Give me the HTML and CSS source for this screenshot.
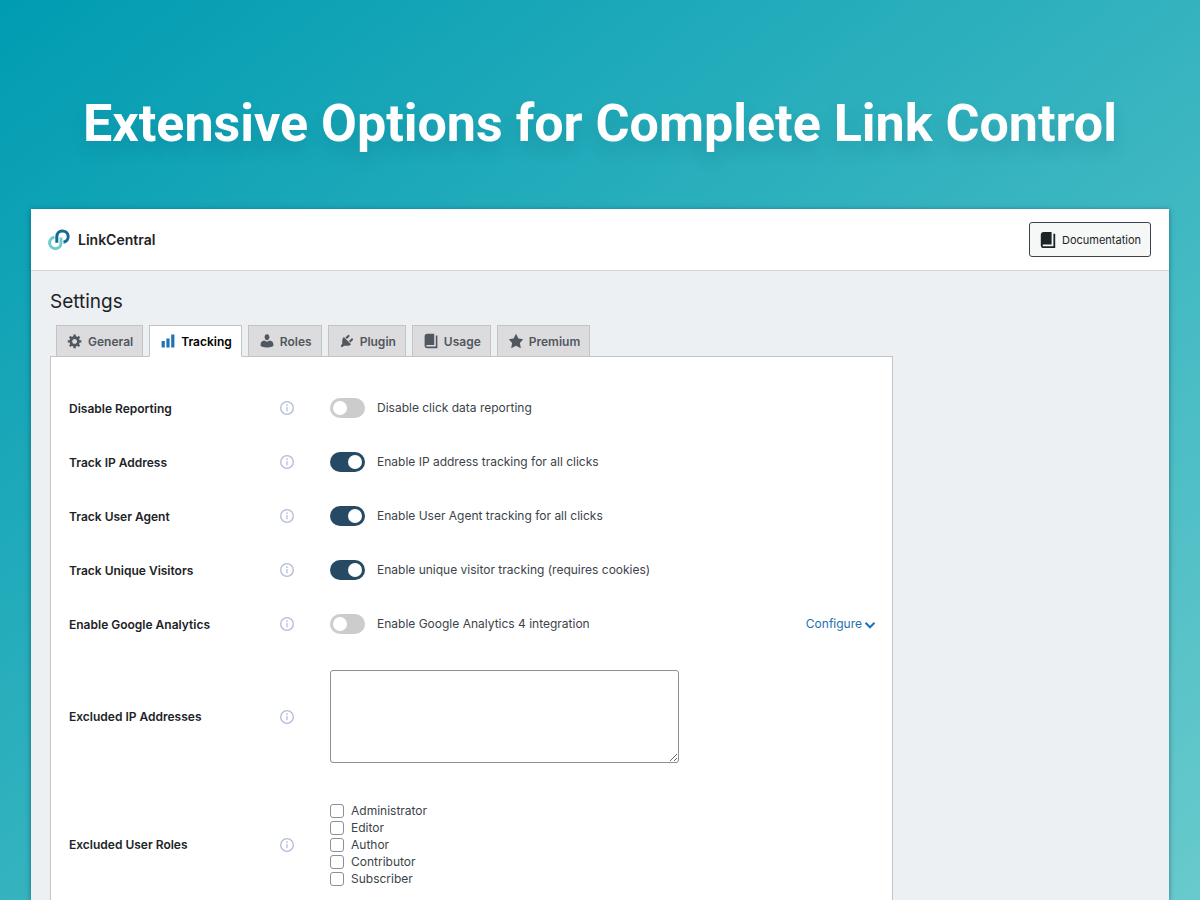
FILE: index.html
```html
<!DOCTYPE html>
<html lang="en">
<head>
<meta charset="utf-8">
<meta name="viewport" content="width=device-width, initial-scale=1">
<title>LinkCentral Settings</title>
<link rel="stylesheet" href="styles.css">
</head>
<body>
<svg class="sprite" aria-hidden="true">
  <symbol id="gear" viewBox="0 0 20 20"><path d="M18 12h-2.18c-.17.7-.44 1.35-.81 1.93l1.54 1.54-2.1 2.1-1.54-1.54c-.58.36-1.23.63-1.91.79V19H8v-2.18c-.68-.16-1.33-.43-1.91-.79l-1.54 1.54-2.12-2.12 1.54-1.54c-.36-.58-.63-1.23-.79-1.91H1V9.03h2.17c.16-.7.44-1.35.8-1.94L2.43 5.55l2.1-2.1 1.54 1.54c.58-.37 1.24-.64 1.93-.81V2h3v2.18c.68.16 1.33.43 1.91.79l1.54-1.54 2.12 2.12-1.54 1.54c.36.59.64 1.24.8 1.94H18V12zm-8.5 1.5c1.66 0 3-1.34 3-3s-1.34-3-3-3-3 1.34-3 3 1.34 3 3 3z"/></symbol>
  <symbol id="chart" viewBox="0 0 20 20"><path d="M18 18V2h-4v16h4zm-6 0V7H8v11h4zm-6 0v-8H2v8h4z"/></symbol>
  <symbol id="person" viewBox="0 0 20 20"><path d="M10 1.500c1.900 0 3 1.500 3 3.500S11.700 9 10 9 7 7 7 5s1.100-3.500 3-3.500zM6.500 9.400L10 11l3.500-1.600c2.700.5 4.500 2.300 4.500 4.600V16c0 1-3 2-8 2s-8-1-8-2v-2c0-2.300 1.800-4.100 4.500-4.600z"/></symbol>
  <symbol id="plug" viewBox="0 0 20 20"><path d="M13.110 4.360L9.870 7.600 8 5.730l3.240-3.240c.35-.34 1.050-.2 1.560.32.52.51.66 1.210.31 1.550zm-8 1.770l.91-1.120 9.010 9.010-1.190.84c-.71.71-2.630 1.160-3.820 1.160H6.140L4.900 17.260c-.59.59-1.540.59-2.120 0-.59-.58-.59-1.530 0-2.120l1.240-1.240v-3.880c0-1.130.4-3.190 1.090-3.890zm7.260 3.970l3.240-3.240c.34-.35 1.040-.21 1.550.31.52.51.66 1.210.31 1.550l-3.240 3.250z"/></symbol>
  <symbol id="book" viewBox="0 0 20 20"><path d="M16 3h2v16H5c-1.660 0-3-1.340-3-3V4c0-1.660 1.340-3 3-3h9v14H5c-.55 0-1 .45-1 1s.45 1 1 1h11V3z"/></symbol>
  <symbol id="star" viewBox="0 0 20 20"><path d="M10 1l3 6 6 .75-4.120 4.620L16 19l-6-3-6 3 1.130-6.630L1 7.750 7 7z"/></symbol>
  <symbol id="chevron" viewBox="0 0 12 12"><path d="M1.500 3.800L6 8.300l4.500-4.500" fill="none" stroke="currentColor" stroke-width="2"/></symbol>
  <symbol id="info" viewBox="0 0 14 14"><circle cx="7" cy="7" r="6.300" fill="none" stroke="currentColor" stroke-width="1.300"/><path d="M6.400 6h1.200v4.300H6.400zM6.300 3.500h1.400v1.400H6.300z"/></symbol>
</svg>

<h1 class="headline">Extensive Options for Complete Link Control</h1>

<div class="window">
  <header class="topbar">
    <div class="brand">
      <svg class="logo" viewBox="0 0 22 22" aria-hidden="true">
        <path d="M6.500 8.300A5.700 5.700 0 1 0 13 14V8.500" fill="none" stroke="#6fcbcf" stroke-width="3"/>
        <path d="M8.800 13.800V7.500A5.700 5.700 0 1 1 15.500 13.200" fill="none" stroke="#136b93" stroke-width="3"/>
      </svg>
      <span>LinkCentral</span>
    </div>
    <button class="docs" type="button"><svg class="icon" aria-hidden="true"><use href="#book"/></svg>Documentation</button>
  </header>

  <main class="content">
    <h2 class="title">Settings</h2>
    <nav class="tabs">
      <a class="tab" href="#general"><svg class="icon" aria-hidden="true"><use href="#gear"/></svg>General</a>
      <a class="tab active" href="#tracking" aria-current="page"><svg class="icon" aria-hidden="true"><use href="#chart"/></svg>Tracking</a>
      <a class="tab" href="#roles"><svg class="icon" aria-hidden="true"><use href="#person"/></svg>Roles</a>
      <a class="tab" href="#plugin"><svg class="icon" aria-hidden="true"><use href="#plug"/></svg>Plugin</a>
      <a class="tab" href="#usage"><svg class="icon" aria-hidden="true"><use href="#book"/></svg>Usage</a>
      <a class="tab" href="#premium"><svg class="icon" aria-hidden="true"><use href="#star"/></svg>Premium</a>
    </nav>

    <form class="panel">
      <div class="row">
        <label class="name" for="reporting">Disable Reporting</label>
        <svg class="info" aria-hidden="true"><use href="#info"/></svg>
        <div class="field"><input class="switch" type="checkbox" id="reporting"><label class="hint" for="reporting">Disable click data reporting</label></div>
      </div>
      <div class="row">
        <label class="name" for="ip">Track IP Address</label>
        <svg class="info" aria-hidden="true"><use href="#info"/></svg>
        <div class="field"><input class="switch" type="checkbox" id="ip" checked><label class="hint" for="ip">Enable IP address tracking for all clicks</label></div>
      </div>
      <div class="row">
        <label class="name" for="agent">Track User Agent</label>
        <svg class="info" aria-hidden="true"><use href="#info"/></svg>
        <div class="field"><input class="switch" type="checkbox" id="agent" checked><label class="hint" for="agent">Enable User Agent tracking for all clicks</label></div>
      </div>
      <div class="row">
        <label class="name" for="unique">Track Unique Visitors</label>
        <svg class="info" aria-hidden="true"><use href="#info"/></svg>
        <div class="field"><input class="switch" type="checkbox" id="unique" checked><label class="hint" for="unique">Enable unique visitor tracking (requires cookies)</label></div>
      </div>
      <div class="row">
        <label class="name" for="analytics">Enable Google Analytics</label>
        <svg class="info" aria-hidden="true"><use href="#info"/></svg>
        <div class="field"><input class="switch" type="checkbox" id="analytics"><label class="hint" for="analytics">Enable Google Analytics 4 integration</label>
          <a class="configure" href="#configure">Configure<svg class="chevron" aria-hidden="true"><use href="#chevron"/></svg></a></div>
      </div>
      <div class="row tall">
        <label class="name" for="excluded">Excluded IP Addresses</label>
        <svg class="info" aria-hidden="true"><use href="#info"/></svg>
        <div class="field"><textarea class="addresses" id="excluded"></textarea></div>
      </div>
      <div class="row tall" role="group" aria-labelledby="roles-name">
        <span class="name" id="roles-name">Excluded User Roles</span>
        <svg class="info" aria-hidden="true"><use href="#info"/></svg>
        <div class="roles">
          <label class="role"><input class="box" type="checkbox">Administrator</label>
          <label class="role"><input class="box" type="checkbox">Editor</label>
          <label class="role"><input class="box" type="checkbox">Author</label>
          <label class="role"><input class="box" type="checkbox">Contributor</label>
          <label class="role"><input class="box" type="checkbox">Subscriber</label>
        </div>
      </div>
    </form>
  </main>
</div>
</body>
</html>
```
FILE: styles.css
```css
* { box-sizing: border-box; }
body {
  margin: 0;
  min-height: 100vh;
  display: flex;
  flex-direction: column;
  background: linear-gradient(to bottom right, #009cb2 0%, #68cacc 100%);
  font-family: Inter, "Liberation Sans", sans-serif;
  font-size: 12px;
  color: #3c434a;
}
.sprite { display: none; }
.headline {
  margin: 0;
  padding: 88px 24px 49px;
  font-family: Roboto, "Noto Sans", sans-serif;
  font-size: 52px;
  line-height: 72px;
  font-weight: 700;
  text-align: center;
  color: #fff;
  text-shadow: 0 10px 16px rgba(0, 60, 80, .15);
}
.window {
  flex: 1;
  display: flex;
  flex-direction: column;
  margin: 0 31px;
  background: #ecf0f3;
  box-shadow: 0 1px 5px rgba(0, 40, 60, .5);
}
.topbar {
  display: flex;
  align-items: center;
  justify-content: space-between;
  height: 62px;
  padding: 0 18px 0 17px;
  background: #fff;
  border-bottom: 1px solid #d2d3d5;
}
.brand {
  display: flex;
  align-items: center;
  gap: 8px;
  font-size: 14px;
  font-weight: 600;
  color: #1d2327;
}
.logo { width: 22px; height: 22px; }
.icon { width: 16px; height: 16px; fill: currentColor; }
.docs {
  display: flex;
  align-items: center;
  gap: 5px;
  height: 35px;
  padding: 0 9px;
  font: inherit;
  font-size: 11px;
  color: #1d2327;
  background: #f6f7f7;
  border: 1px solid #3c434a;
  border-radius: 3px;
}
.docs .icon { width: 18px; height: 18px; }
.content {
  flex: 1;
  display: flex;
  flex-direction: column;
  padding: 19px 20px 0 19px;
}
.title {
  margin: 0;
  font-size: 19px;
  line-height: 24px;
  font-weight: 400;
  color: #1d2327;
}
.tabs {
  display: flex;
  gap: 6px;
  margin: 11px 0 -1px;
  padding-left: 6px;
}
.tab {
  display: flex;
  align-items: center;
  gap: 5px;
  height: 32px;
  padding: 0 9px 0 10px;
  font-size: 12px;
  font-weight: 600;
  color: #50575e;
  text-decoration: none;
  background: #dcdcde;
  border: 1px solid #c3c4c7;
}
.tab.active {
  position: relative;
  color: #000;
  background: #fff;
  border-bottom-color: #fff;
}
.tab.active .icon { fill: #2271b1; }
.panel {
  flex: 1;
  max-width: 843px;
  padding: 24px 16px 0 18px;
  background: #fff;
  border: 1px solid #c3c4c7;
  border-bottom: 0;
}
.row {
  display: grid;
  grid-template-columns: 211px 50px 1fr;
  align-items: center;
  min-height: 54px;
}
.tall { padding: 19px 0; }
.tall:last-child { padding: 20px 0 0; }
.name { font-weight: 600; color: #1d2327; }
.info { width: 14px; height: 14px; color: #b3bad8; fill: currentColor; }
.field { display: flex; align-items: center; gap: 12px; }
.hint { padding-bottom: 2px; }
.switch {
  appearance: none;
  width: 35px;
  height: 20px;
  margin: 0;
  padding: 3px;
  display: flex;
  border-radius: 10px;
  background: #ccc;
}
.switch::before {
  content: "";
  width: 14px;
  height: 14px;
  border-radius: 50%;
  background: #fff;
}
.switch:checked { justify-content: flex-end; background: #264a63; }
.configure {
  display: flex;
  align-items: flex-end;
  gap: 2px;
  margin-left: auto;
  padding-bottom: 2px;
  color: #2271b1;
  text-decoration: none;
}
.chevron { width: 12px; height: 12px; }
.addresses {
  width: 349px;
  height: 93px;
  margin: 0;
  border: 1px solid #8c8f94;
  border-radius: 3px;
  background: #fff;
}
.role { display: flex; align-items: center; gap: 7px; line-height: 17px; }
.box {
  appearance: none;
  width: 14px;
  height: 14px;
  margin: 0;
  border: 1px solid #8c8f94;
  border-radius: 3px;
  background: #fff;
}
```
